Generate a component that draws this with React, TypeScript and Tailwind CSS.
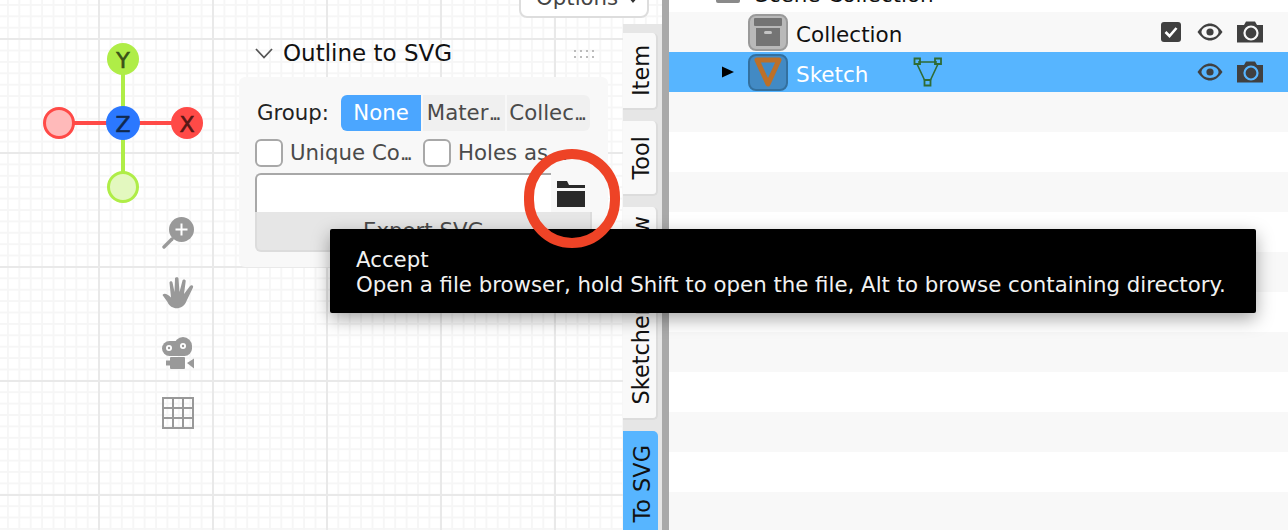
import type { ReactNode } from "react";

const font = "font-['DejaVu_Sans',sans-serif]";

function Eye() {
  return (
    <svg width="26" height="18" viewBox="0 0 26 18" className="-mt-[1px]">
      <path d="M0.500 9 C5 2.500 9 0.500 13 0.500 C17 0.500 21 2.500 25.500 9 C21 15.500 17 17.500 13 17.500 C9 17.500 5 15.500 0.500 9 Z" fill="#404040" />
      <ellipse cx="13" cy="9" rx="8.600" ry="6" fill="currentColor" />
      <circle cx="13" cy="9" r="3.600" fill="#404040" />
    </svg>
  );
}

function Camera() {
  return (
    <svg width="26" height="22" viewBox="0 0 26 22">
      <path d="M0 4 H7 L9 0.500 H18 L20 4 H26 V21.500 H0 Z" fill="#404040" />
      <circle cx="14" cy="12" r="6.500" fill="none" stroke="currentColor" strokeWidth="2.200" />
    </svg>
  );
}

function Dots() {
  return <span className="tracking-[-3.500px]">...</span>;
}

function Row({ tone, children }: { tone: "white" | "gray"; children?: ReactNode }) {
  return (
    <div className={`flex h-10 shrink-0 items-center ${tone === "white" ? "bg-white" : "bg-[#f8f8f8]"}`}>
      {children}
    </div>
  );
}

function SideTab({ label, className }: { label: string; className: string }) {
  return (
    <div className={`flex w-[35px] shrink-0 items-center justify-center rounded-r-[5px] border-r-2 border-b-2 border-[#dcdcdc] bg-[#f9f9f9] pl-[4px] ${className}`}>
      <span className="rotate-180 text-[22.400px] leading-none text-[#111] [writing-mode:vertical-rl]">{label}</span>
    </div>
  );
}

function Gizmo() {
  return (
    <svg className="absolute top-[40px] left-[40px]" width="168" height="168" viewBox="0 0 168 168">
      <line x1="83" y1="19" x2="83" y2="147" stroke="#afed47" strokeWidth="4" />
      <line x1="19" y1="83" x2="147" y2="83" stroke="#ff4a47" strokeWidth="4" />
      <circle cx="83" cy="19" r="16" fill="#afed47" />
      <circle cx="147" cy="83" r="16" fill="#ff4a47" />
      <circle cx="19" cy="83" r="14.500" fill="#ffbaba" stroke="#ff4a47" strokeWidth="3" />
      <circle cx="83" cy="147" r="14.500" fill="#e3f8bf" stroke="#afed47" strokeWidth="3" />
      <circle cx="83" cy="83" r="17" fill="#2b78ff" />
      <text x="83" y="27.500" textAnchor="middle" fontSize="22" fill="#3a5318" stroke="#3a5318" strokeWidth="0.600">Y</text>
      <text x="147" y="91.500" textAnchor="middle" fontSize="22" fill="#571816" stroke="#571816" strokeWidth="0.600">X</text>
      <text x="83" y="91.500" textAnchor="middle" fontSize="22" fill="#10294f" stroke="#10294f" strokeWidth="0.600">Z</text>
    </svg>
  );
}

function NavIcons() {
  return (
    <div className="absolute top-[217px] left-[162px] flex w-[32px] flex-col gap-[28px]">
      <svg width="32" height="32" viewBox="0 0 32 32">
        <circle cx="19.500" cy="12.500" r="12.500" fill="#999" />
        <line x1="2" y1="30" x2="10" y2="22" stroke="#999" strokeWidth="3.400" strokeLinecap="round" />
        <path d="M19.500 6.500 V18.500 M13.500 12.500 H25.500" stroke="#fff" strokeWidth="2" />
      </svg>
      <svg width="32" height="32" viewBox="0 0 32 32">
        <path d="M0.500 18 C2 16 5 16.500 9 20.500 L7.500 6 C7.300 4 10 3.600 10.500 5.500 L12.500 15 L13 1.500 C13.200 -0.300 16.500 -0.300 16.500 1.500 L17.500 15 L20.500 3.500 C21 1.800 24 2.300 23.700 4.200 L22 17 L28 9 C29.300 7.500 31.800 8.500 31 10.500 L24.500 24 C21 33.500 9 33.500 5.500 25 Z" fill="#999" />
      </svg>
      <svg width="32" height="32" viewBox="0 0 32 32">
        <rect x="0" y="4" width="30" height="15" rx="7.500" fill="#999" />
        <circle cx="21" cy="9" r="9" fill="#999" />
        <circle cx="7" cy="11" r="3" fill="#fff" />
        <circle cx="7" cy="11" r="1.200" fill="#999" />
        <circle cx="21" cy="9" r="3" fill="#fff" />
        <circle cx="21" cy="9" r="1.200" fill="#999" />
        <rect x="8" y="20" width="15" height="12" rx="1" fill="#999" />
        <rect x="4" y="23.500" width="4" height="5" fill="#999" />
        <path d="M25 26 L32 21.500 V31.500 Z" fill="#999" />
      </svg>
      <svg width="32" height="32" viewBox="0 0 32 32">
        <path d="M1 1 H31 V31 H1 Z M11 1 V31 M21 1 V31 M1 11 H31 M1 21 H31" fill="none" stroke="#999" strokeWidth="2" />
      </svg>
    </div>
  );
}

function Check({ children, className }: { children: ReactNode; className: string }) {
  return (
    <div className={`flex items-center gap-[7px] ${className}`}>
      <span className="h-[28px] w-[28px] shrink-0 rounded-[6px] border-2 border-[#a8a8a8] bg-white" />
      <span className="text-[21.300px] leading-none whitespace-nowrap text-[#4a4a4a]">{children}</span>
    </div>
  );
}

function Panel() {
  return (
    <div className="absolute top-[30px] left-[239px] w-[369px]">
      <div className="flex h-[47px] items-center pr-[14px] pl-[16px]">
        <svg width="18" height="11" viewBox="0 0 18 11">
          <path d="M1 1 L9 9.500 L17 1" fill="none" stroke="#555" strokeWidth="1.800" />
        </svg>
        <span className="ml-[10px] text-[23px] leading-none text-[#111]">Outline to SVG</span>
        <span className="ml-auto grid grid-cols-4 gap-[4px]">
          {Array.from({ length: 8 }).map((_, i) => (
            <span key={i} className="h-[2px] w-[2px] bg-[#bbb]" />
          ))}
        </span>
      </div>
      <div className="h-[190px] rounded-[6px] bg-[#f8f8f8] pt-[18px] pl-[16px]">
        <div className="flex h-[36px] items-center text-[21.300px]">
          <span className="ml-[2px] w-[84px] leading-none text-[#222]">Group:</span>
          <span className="flex h-full w-[80px] items-center justify-center rounded-l-[6px] bg-[#4ba6ff] text-white">None</span>
          <span className="ml-[2px] flex h-full w-[82px] items-center justify-center bg-[#f0f0f0] pr-[3px] whitespace-nowrap text-[#4a4a4a]">Mater<Dots /></span>
          <span className="ml-[2px] flex h-full w-[83px] items-center justify-center rounded-r-[6px] bg-[#f0f0f0] pr-[4px] whitespace-nowrap text-[#4a4a4a]">Collec<Dots /></span>
        </div>
        <div className="mt-[8px] flex h-[28px] items-center">
          <Check className="w-[168px]">Unique Co<Dots /></Check>
          <Check className="w-[160px]">Holes as <Dots /></Check>
        </div>
        <div className="mt-[6px] flex h-[39px] w-[337px]">
          <div className="w-[296px] rounded-tl-[6px] border-t-2 border-l-2 border-[#a8a8a8] bg-white" />
          <div className="flex flex-1 items-center justify-center rounded-tr-[6px] bg-[#f8f8f8] pt-[2px] pr-[1px]">
            <svg width="28" height="26" viewBox="0 0 28 26">
              <path d="M0 0 H10 L12 4 H28 V7 H0 Z M0 10 H28 V26 H0 Z" fill="#2a2a2a" />
            </svg>
          </div>
        </div>
        <div className="flex h-[40px] w-[337px] items-center justify-center rounded-b-[6px] border-2 border-t-0 border-[#dcdcdc] bg-[#e6e6e6] text-[21.300px] text-[#4a4a4a]">
          Export SVG
        </div>
      </div>
    </div>
  );
}

export default function App() {
  return (
    <div className={`relative flex h-[530px] w-[1288px] overflow-hidden bg-white ${font}`}>
      {/* 3D viewport */}
      <div className="relative w-[662px] shrink-0 bg-white bg-[linear-gradient(to_right,#e9e9e9_2px,transparent_2px),linear-gradient(to_bottom,#e9e9e9_2px,transparent_2px),linear-gradient(to_right,#f6f6f6_2px,transparent_2px),linear-gradient(to_bottom,#f6f6f6_2px,transparent_2px)] bg-[size:114px_114px,114px_114px,11.400px_11.400px,11.400px_11.400px] bg-[position:98px_38px,98px_38px,7px_4px,7px_4px]">
        <Gizmo />
        <NavIcons />
        <Panel />

        <div className="absolute -top-[22px] left-[519px] flex h-[40px] w-[130px] items-center justify-between rounded-[8px] border-2 border-[#ddd] bg-white pr-[8px] pl-[15px] text-[21.300px] text-[#444]">
          <span>Options</span>
          <svg width="12" height="10" viewBox="0 0 12 10">
            <path d="M1 2 L6 8 L11 2" fill="none" stroke="#333" strokeWidth="2.500" />
          </svg>
        </div>

        {/* tabs */}
        <div className="absolute top-[24px] right-0 bottom-0 flex w-[39px] flex-col gap-[11px] bg-[#e6e6e6] pt-[9px]">
          <SideTab label="Item" className="h-[77px]" />
          <SideTab label="Tool" className="h-[75px]" />
          <SideTab label="View" className="h-[74px]" />
          <SideTab label="Sketcher" className="h-[128px]" />
          <div className="flex h-[106px] w-[35px] shrink-0 items-center justify-center rounded-tr-[5px] bg-[#57b5ff] pl-[4px]">
            <span className="rotate-180 text-[22.400px] leading-none text-[#111] [writing-mode:vertical-rl]">To SVG</span>
          </div>
        </div>
      </div>

      <div className="w-[7px] shrink-0 bg-[#a9a9a9]" />

      {/* outliner */}
      <div className="flex flex-1 flex-col pb-[8px] text-[21.500px] text-[#111]">
        <div className="-mt-[28px] flex h-10 shrink-0 items-center bg-white pl-[47px]">
          <span className="h-[22px] w-[24px] rounded-[2px] bg-[#8a8a8a]" />
          <span className="ml-[15px] pt-[5px] leading-none">Scene Collection</span>
        </div>
        <Row tone="gray">
          <span className="ml-[79px] flex h-[37px] w-[40px] items-center justify-center rounded-[8px] border-2 border-[#9a9a9a] bg-[#b9b9b9]">
            <svg width="28" height="28" viewBox="0 0 28 28">
              <rect x="0" y="0" width="28" height="8" rx="1" fill="#747474" />
              <rect x="2" y="10" width="24" height="18" fill="#747474" />
              <rect x="10" y="13" width="8" height="3" rx="1.500" fill="#c4c4c4" />
            </svg>
          </span>
          <span className="ml-[8px] pt-[5px] leading-none">Collection</span>
          <span className="ml-auto flex h-[20px] w-[20px] items-center justify-center rounded-[3px] bg-[#404040]">
            <svg width="14" height="12" viewBox="0 0 14 12">
              <path d="M1.500 6 L5.500 10 L12.500 2" fill="none" stroke="#fff" strokeWidth="2.600" />
            </svg>
          </span>
          <span className="ml-[16px] text-[#f8f8f8]"><Eye /></span>
          <span className="mr-[25px] ml-[14px] text-[#f8f8f8]"><Camera /></span>
        </Row>
        <div className="flex h-10 shrink-0 items-center bg-[#57b5ff]">
          <svg className="ml-[53px]" width="12" height="12" viewBox="0 0 12 12">
            <path d="M0 0.500 L12 6 L0 11.500 Z" fill="#000" />
          </svg>
          <span className="ml-[14px] flex h-[37px] w-[40px] items-center justify-center rounded-[8px] border-2 border-[#33709f] bg-[#428ac4]">
            <svg width="28" height="30" viewBox="0 0 28 30">
              <path d="M3 3 H25 L14 27 Z" fill="none" stroke="#bc7029" strokeWidth="5" strokeLinejoin="round" />
            </svg>
          </span>
          <span className="ml-[8px] pt-[5px] leading-none text-white">Sketch</span>
          <svg className="ml-[45px]" width="30" height="30" viewBox="0 0 30 30">
            <path d="M5 5 H24 M4 7 L12 24 M25 7 L17 24" fill="none" stroke="#2f6b34" strokeWidth="1.600" />
            <path d="M1.500 1.500 H7 V7 H1.500 Z M22 1.500 H28 V7 H22 Z M11.500 23 H17.500 V28.500 H11.500 Z" fill="none" stroke="#2f6b34" strokeWidth="1.800" />
          </svg>
          <span className="ml-auto text-[#57b5ff]"><Eye /></span>
          <span className="mr-[25px] ml-[14px] text-[#57b5ff]"><Camera /></span>
        </div>
        {["gray", "white", "gray", "white", "gray", "white", "gray", "white", "gray", "white", "gray"].map((tone, i) => (
          <Row key={i} tone={tone as "white" | "gray"} />
        ))}
      </div>

      {/* tooltip */}
      <div className="absolute top-[229px] left-[330px] h-[84px] w-[926px] rounded-[2px] bg-black pt-[18px] pl-[26px] text-[21.300px] leading-[25px] whitespace-nowrap text-[#f2f2f2] shadow-[0_6px_18px_rgba(0,0,0,0.35)]">
        <div>Accept</div>
        <div>Open a file browser, hold Shift to open the file, Alt to browse containing directory.</div>
      </div>

      {/* annotation ring */}
      <div className="absolute top-[149px] left-[524px] h-[99px] w-[96px] rounded-full border-[10px] border-[#ee4326]" />
    </div>
  );
}
